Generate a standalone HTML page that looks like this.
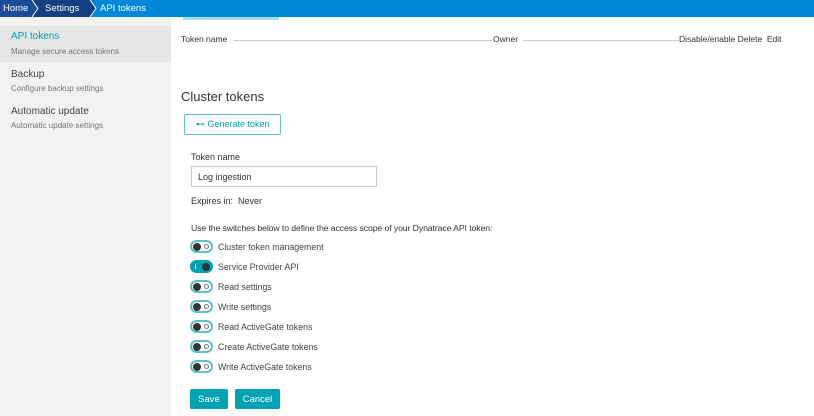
<!DOCTYPE html><html><head><style>
body{margin:0;width:814px;height:416px;overflow:hidden;font-family:"Liberation Sans",sans-serif;background:#fff;position:relative;color:#333}
.a{position:absolute;white-space:nowrap}
.top{position:absolute;left:0;top:0;width:814px;height:17px;background:#0088d8}
.sb{position:absolute;left:0;top:17px;width:171px;height:399px;background:#f2f2f2}
.tg{position:absolute;left:190px;width:19px;height:9px;border:2px solid #5ec3c8;border-radius:7px;background:#fff}
.tg::before{content:"";position:absolute;left:1px;top:0.5px;width:8px;height:8px;border-radius:50%;background:#333}
.tg::after{content:"";position:absolute;right:2px;top:2px;width:3px;height:3px;border-radius:50%;border:1px solid #777}
.tg.on{background:#00a1b2;border-color:#00a1b2}
.tg.on::before{left:auto;right:1px}
.tg.on::after{left:3px;right:auto;width:0;height:5px;border-radius:0;border:0;border-left:1px solid #fff;top:2px}
.lab{font-size:8.8px;color:#444;left:218px}
.btn{position:absolute;background:#00a1b2;color:#fff;font-size:9.5px;text-align:center;line-height:22px;height:20px;border-radius:2px}
.ln{position:absolute;top:40px;height:1px;background:#ccc}
</style></head><body>
<div class="top"></div>
<svg class="a" style="left:0;top:0" width="100" height="17">
<path d="M0 0H32L38 8.5L32 17H0Z" fill="#1a4c9a"/>
<path d="M32 0H90L96 8.5L90 17H32L38 8.5Z" fill="#123e82"/>
<path d="M32 0L38 8.5L32 17M90 0L96 8.5L90 17" fill="none" stroke="#fff" stroke-width="1"/>
</svg>
<div class="a" style="left:3px;top:3px;font-size:9.5px;color:#fff">Home</div>
<div class="a" style="left:45px;top:3px;font-size:9.5px;color:#fff">Settings</div>
<div class="a" style="left:100px;top:3px;font-size:9.5px;color:#fff">API tokens</div>
<div class="sb"></div>
<div class="a" style="left:0;top:26px;width:171px;height:36px;background:#e6e6e6"></div>
<div class="a" style="left:11px;top:31px;font-size:10px;color:#00a1b2">API tokens</div>
<div class="a" style="left:11px;top:47px;font-size:8px;color:#777">Manage secure access tokens</div>
<div class="a" style="left:11px;top:69px;font-size:10px;color:#444">Backup</div>
<div class="a" style="left:11px;top:84px;font-size:8px;color:#777">Configure backup settings</div>
<div class="a" style="left:11px;top:106px;font-size:10px;color:#444">Automatic update</div>
<div class="a" style="left:11px;top:121px;font-size:8px;color:#777">Automatic update settings</div>
<div class="a" style="left:183px;top:17px;width:96px;height:3px;background:#a9dfe3"></div>
<div class="a" style="left:181px;top:34px;font-size:8.5px;color:#333">Token name</div>
<div class="ln" style="left:233px;width:259px"></div>
<div class="a" style="left:493px;top:34px;font-size:8.5px;color:#333">Owner</div>
<div class="ln" style="left:523px;width:156px"></div>
<div class="a" style="left:679px;top:34px;font-size:8.5px;color:#333">Disable/enable Delete &nbsp;Edit</div>
<div class="a" style="left:181px;top:89px;font-size:13px;color:#333">Cluster tokens</div>
<div class="a" style="left:184px;top:114px;width:95px;height:19px;border:1px solid #5ec3c8;border-radius:2px"></div>
<div class="a" style="left:196px;top:119px;font-size:9px;color:#00a1b2">⊷ Generate token</div>
<div class="a" style="left:191px;top:152px;font-size:9px;color:#333">Token name</div>
<div class="a" style="left:191px;top:166px;width:184px;height:19px;border:1px solid #ccc"></div>
<div class="a" style="left:198px;top:172px;font-size:9px;color:#333">Log ingestion</div>
<div class="a" style="left:191px;top:196px;font-size:9px;color:#333">Expires in: &nbsp;Never</div>
<div class="a" style="left:191px;top:223px;font-size:8.7px;color:#333;letter-spacing:-0.1px">Use the switches below to define the access scope of your Dynatrace API token:</div>
<div class="tg" style="top:240px"></div><div class="a lab" style="top:242px">Cluster token management</div>
<div class="tg on" style="top:260px"></div><div class="a lab" style="top:262px">Service Provider API</div>
<div class="tg" style="top:280px"></div><div class="a lab" style="top:282px">Read settings</div>
<div class="tg" style="top:300px"></div><div class="a lab" style="top:302px">Write settings</div>
<div class="tg" style="top:320px"></div><div class="a lab" style="top:322px">Read ActiveGate tokens</div>
<div class="tg" style="top:340px"></div><div class="a lab" style="top:342px">Create ActiveGate tokens</div>
<div class="tg" style="top:360px"></div><div class="a lab" style="top:362px">Write ActiveGate tokens</div>
<div class="btn" style="left:190px;top:389px;width:38px">Save</div>
<div class="btn" style="left:235px;top:389px;width:45px">Cancel</div>
</body></html>
